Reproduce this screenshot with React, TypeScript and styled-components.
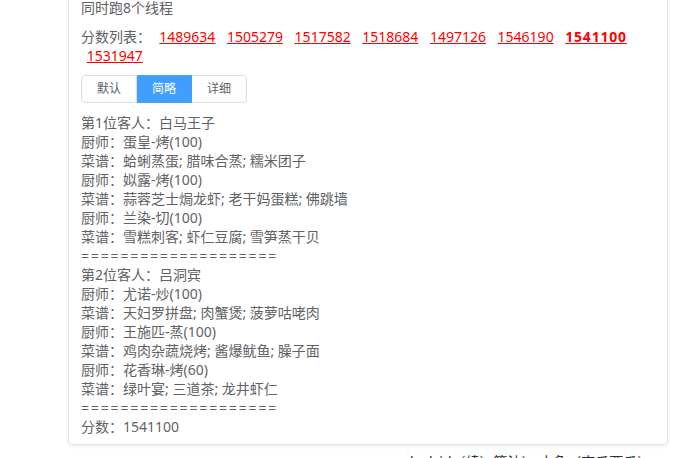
import { Fragment, useState } from "react";
import styled, { createGlobalStyle } from "styled-components";

const GlobalStyle = createGlobalStyle`
  html, body {
    margin: 0;
    padding: 0;
    background: #fff;
    overflow: hidden;
  }
  body {
    font-family: "Noto Sans", "Noto Sans CJK SC", sans-serif;
    font-size: 14px;
    color: #606266;
    text-autospace: no-autospace;
  }
`;

const Page = styled.div`
  padding: 0 18px 0 68px;
  margin-top: -12px;
`;

const Card = styled.div`
  width: 600px;
  box-sizing: border-box;
  border: 1px solid #e2e4e8;
  border-radius: 4px;
  background: #fff;
  box-shadow: 0 1px 4px rgba(0, 0, 0, 0.08);
  padding: 9px 12px 8px 12px;
`;

const Para = styled.div`
  line-height: 19px;
  margin-bottom: 10px;
`;

const Label = styled.span`
  margin-right: 2.5px;
`;

const ScoreLink = styled.a<{ $best?: boolean }>`
  color: #f00;
  text-decoration: underline;
  margin: 0 5.8px;
  font-weight: ${(p) => (p.$best ? 700 : 400)};
  letter-spacing: ${(p) => (p.$best ? "0.8px" : "normal")};
  cursor: pointer;
`;

const Group = styled.div`
  display: inline-flex;
  margin-bottom: 10px;
`;

const SegButton = styled.button<{ $active?: boolean; $first?: boolean; $last?: boolean }>`
  font-family: inherit;
  font-size: 12px;
  height: 28px;
  padding: 0 15px;
  border: 1px solid ${(p) => (p.$active ? "#409eff" : "#dcdfe6")};
  border-left-width: ${(p) => (p.$first ? "1px" : "0")};
  background: ${(p) => (p.$active ? "#409eff" : "#fff")};
  color: ${(p) => (p.$active ? "#fff" : "#606266")};
  border-radius: ${(p) => (p.$first ? "4px 0 0 4px" : p.$last ? "0 4px 4px 0" : "0")};
  cursor: pointer;
  line-height: 26px;
`;

const Result = styled.div`
  line-height: 19px;
`;

const Line = styled.div<{ $rule?: boolean }>`
  white-space: nowrap;
  letter-spacing: ${(p) => (p.$rule ? "1.85px" : "normal")};
`;

const Footer = styled.div`
  padding: 7px 0 0 342px;
  line-height: 19px;
  color: #303133;
  white-space: nowrap;
`;

const scores = [1489634, 1505279, 1517582, 1518684, 1497126, 1546190, 1541100, 1531947];
const best = 1541100;

const lines = [
  "第1位客人：白马王子",
  "厨师：蛋皇-烤(100)",
  "菜谱：蛤蜊蒸蛋; 腊味合蒸; 糯米团子",
  "厨师：姒露-烤(100)",
  "菜谱：蒜蓉芝士焗龙虾; 老干妈蛋糕; 佛跳墙",
  "厨师：兰染-切(100)",
  "菜谱：雪糕刺客; 虾仁豆腐; 雪笋蒸干贝",
  "====================",
  "第2位客人：吕洞宾",
  "厨师：尤诺-炒(100)",
  "菜谱：天妇罗拼盘; 肉蟹煲; 菠萝咕咾肉",
  "厨师：王施匹-蒸(100)",
  "菜谱：鸡肉杂蔬烧烤; 酱爆鱿鱼; 臊子面",
  "厨师：花香琳-烤(60)",
  "菜谱：绿叶宴; 三道茶; 龙井虾仁",
  "====================",
  "分数：1541100",
];

const modes = ["默认", "简略", "详细"];

export default function App() {
  const [mode, setMode] = useState(1);
  return (
    <Page>
      <GlobalStyle />
      <Card>
        <Para>同时跑8个线程</Para>
        <Para>
          <Label>分数列表：</Label>
          {scores.map((s) => (
            <Fragment key={s}>
              <wbr />
              <ScoreLink $best={s === best}>{s}</ScoreLink>
            </Fragment>
          ))}
        </Para>
        <Group>
          {modes.map((m, i) => (
            <SegButton
              key={m}
              $active={mode === i}
              $first={i === 0}
              $last={i === modes.length - 1}
              onClick={() => setMode(i)}
            >
              {m}
            </SegButton>
          ))}
        </Group>
        <Result>
          {lines.map((l, i) => (
            <Line key={i} $rule={l.startsWith("=")}>
              {l}
            </Line>
          ))}
        </Result>
      </Card>
      <Footer>by lzid（续）算法）  小鱼（南瓜西瓜）</Footer>
    </Page>
  );
}
